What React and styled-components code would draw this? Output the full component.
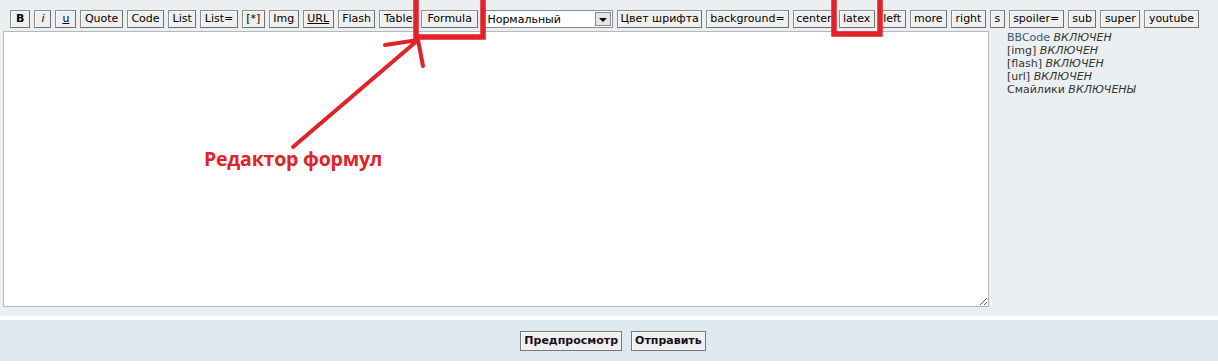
import styled, { createGlobalStyle } from 'styled-components';

const GlobalStyle = createGlobalStyle`
	html, body{
		margin: 0;
		padding: 0;
		background: #fff;
	}
	body{
		font-family: Verdana, "DejaVu Sans", sans-serif;
		font-size: 11px;
	}
`;

const Page = styled.div`
	position: relative;
	width: 1218px;
	height: 364px;
	overflow: hidden;
	background: #fff;
`;

const Editor = styled.div`
	background: #ebeff2;
	height: 316px;
	box-sizing: border-box;
	padding-top: 10px;
`;

const Toolbar = styled.div`
	display: flex;
	align-items: center;
	gap: 4px;
	padding-left: 10px;
	height: 18px;

	& > *{
		flex-shrink: 0;
	}
`;

const Btn = styled.button`
	font-family: Verdana, "DejaVu Sans", sans-serif;
	font-size: 11px;
	line-height: 14px;
	height: 18px;
	padding: 1px ${p => p.$pad || 3.5}px;
	margin: 0;
	box-sizing: border-box;
	background: #efefef;
	color: #000;
	border: 1px solid #8e8e8e;
	border-right-color: #6f6f6f;
	border-bottom-color: #6f6f6f;
	box-shadow: inset 1px 1px 0 #fbfbfb;
	font-weight: ${p => (p.$bold ? 'bold' : 'normal')};
	font-style: ${p => (p.$italic ? 'italic' : 'normal')};
	text-decoration: ${p => (p.$under ? 'underline' : 'none')};
	white-space: nowrap;
	cursor: pointer;
`;

const FakeSelect = styled.div`
	display: flex;
	align-items: center;
	justify-content: space-between;
	width: 131px;
	height: 18px;
	box-sizing: border-box;
	border: 1px solid #8e8e8e;
	background: #fff;
	padding: 0 1px 0 4px;
	color: #000;
	font-size: 11px;
`;

const SelectArrow = styled.span`
	display: flex;
	align-items: center;
	justify-content: center;
	width: 16px;
	height: 14px;
	box-sizing: border-box;
	background: #e6e6e6;
	border: 1px solid #8a8a8a;

	&::after{
		content: '';
		border-left: 4px solid transparent;
		border-right: 4px solid transparent;
		border-top: 4px solid #000;
		margin-top: 2px;
	}
`;

const Body = styled.div`
	display: flex;
	margin-top: 3px;
`;

const TextArea = styled.textarea`
	display: block;
	margin-left: 3px;
	width: 986px;
	height: 276px;
	flex-shrink: 0;
	box-sizing: border-box;
	border: 1px solid #b4b8bc;
	background: #fff;
	resize: both;
	outline: none;
	padding: 2px;
	font-family: Verdana, "DejaVu Sans", sans-serif;
	font-size: 11px;
`;

const Status = styled.div`
	padding: 1px 0 0 18px;
	color: #333;
	font-size: 11px;
	line-height: 12.9px;

	p{
		margin: 0;
		white-space: nowrap;
	}
	a{
		color: #37587a;
		text-decoration: none;
	}
	em{
		color: #333;
	}
`;

const Divider = styled.div`
	height: 4px;
	background: #fff;
`;

const Submit = styled.div`
	display: flex;
	justify-content: center;
	gap: 9px;
	padding: 11px 0 0 8px;
	height: 41px;
	box-sizing: border-box;
	background: #dfe9f0;
`;

const SubmitBtn = styled(Btn)`
	height: 20px;
	font-weight: bold;
	color: #1c0f1c;
	padding: 2px 3px;
	line-height: 14px;
	border-color: #777;
`;

const Overlay = styled.svg`
	position: absolute;
	left: 0;
	top: 0;
	pointer-events: none;
`;

const Note = styled.span`
	position: absolute;
	left: 204px;
	top: 145px;
	font-family: "Open Sans", "Liberation Sans", sans-serif;
	font-weight: bold;
	font-size: 19.5px;
	color: #e42128;
	letter-spacing: -0.2px;
	white-space: nowrap;
`;

const tools = [
	{ label: 'B', bold: true, pad: 5 },
	{ label: 'i', italic: true, pad: 6 },
	{ label: 'u', under: true, pad: 6 },
	{ label: 'Quote' },
	{ label: 'Code' },
	{ label: 'List' },
	{ label: 'List=' },
	{ label: '[*]' },
	{ label: 'Img' },
	{ label: 'URL', under: true },
	{ label: 'Flash' },
	{ label: 'Table' },
	{ label: 'Formula', pad: 5.5 },
	{ select: true },
	{ label: 'Цвет шрифта', pad: 2 },
	{ label: 'background=' },
	{ label: 'center', pad: 2 },
	{ label: 'latex' },
	{ label: 'left' },
	{ label: 'more' },
	{ label: 'right' },
	{ label: 's' },
	{ label: 'spoiler=' },
	{ label: 'sub' },
	{ label: 'super' },
	{ label: 'youtube' },
];

export default function App() {
	return (
		<Page>
			<GlobalStyle />
			<Editor>
				<Toolbar>
					{tools.map((t, i) =>
						t.select ? (
							<FakeSelect key={i}>
								<span>Нормальный</span>
								<SelectArrow />
							</FakeSelect>
						) : (
							<Btn key={i} $bold={t.bold} $italic={t.italic} $under={t.under} $pad={t.pad}>
								{t.label}
							</Btn>
						)
					)}
				</Toolbar>
				<Body>
					<TextArea />
					<Status>
						<p><a href="#">BBCode</a> <em>ВКЛЮЧЕН</em></p>
						<p>[img] <em>ВКЛЮЧЕН</em></p>
						<p>[flash] <em>ВКЛЮЧЕН</em></p>
						<p>[url] <em>ВКЛЮЧЕН</em></p>
						<p>Смайлики <em>ВКЛЮЧЕНЫ</em></p>
					</Status>
				</Body>
			</Editor>
			<Divider />
			<Submit>
				<SubmitBtn>Предпросмотр</SubmitBtn>
				<SubmitBtn>Отправить</SubmitBtn>
			</Submit>

			<Overlay width="1218" height="364">
				<g fill="none" stroke="#e42128" strokeWidth="5.5">
					<rect x="416" y="-3" width="67" height="40" />
					<rect x="834" y="-3" width="46" height="37" />
				</g>
				<g stroke="#e42128" strokeWidth="4" strokeLinecap="round" fill="none">
					<line x1="293" y1="147" x2="418" y2="40" />
					<line x1="385" y1="45" x2="418" y2="40" />
					<line x1="418" y1="40" x2="423" y2="66" />
				</g>
			</Overlay>
			<Note>Редактор формул</Note>
		</Page>
	);
}
